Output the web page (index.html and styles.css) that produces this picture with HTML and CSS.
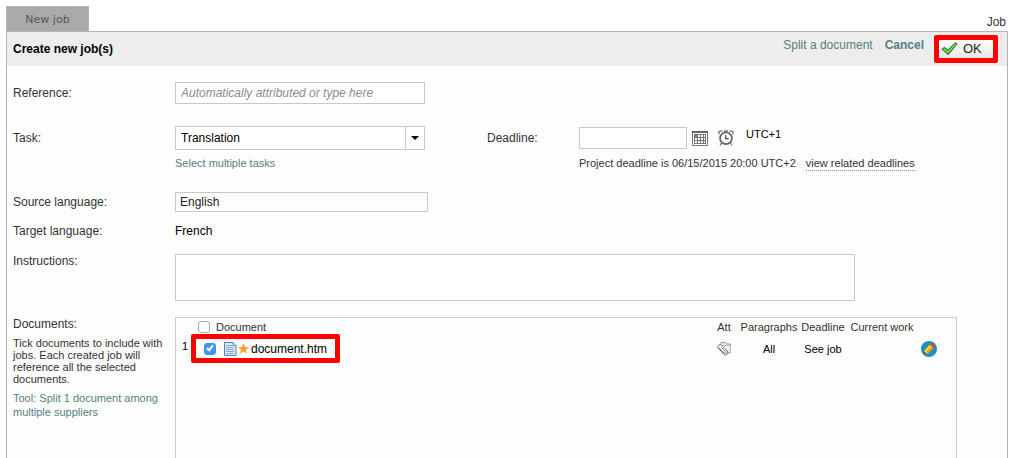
FILE: index.html
```html
<!DOCTYPE html>
<html lang="en">
<head>
  <meta charset="UTF-8">
  <meta name="viewport" content="width=device-width, initial-scale=1.0">
  <title>New job</title>
  <link rel="stylesheet" href="styles.css">
</head>
<body>

  <div class="top">
    <div class="tab">New job</div>
    <div class="page-name">Job</div>
  </div>

  <form class="panel">
    <div class="panel-header">
      <h1>Create new job(s)</h1>
      <div class="actions">
        <a href="#">Split a document</a>
        <a href="#" class="cancel">Cancel</a>
        <span class="highlight">
          <button type="button" class="ok-button">
            <svg width="17" height="14" viewBox="0 0 17 14">
              <path d="M.8 7.200L3.500 5.300L6.800 8L14.200 .8L16.200 1.800L7.300 12.800Z" fill="#4fae35" stroke="#2f7d22" stroke-linejoin="round"/>
              <path d="M2.600 7L6.900 10.200L14.300 2.300" fill="none" stroke="#9be077"/>
            </svg>
            OK
          </button>
        </span>
      </div>
    </div>

    <div class="row">
      <label for="reference">Reference:</label>
      <input id="reference" type="text" class="field" placeholder="Automatically attributed or type here">
    </div>

    <div class="row row-task">
      <label for="task">Task:</label>
      <div class="task">
        <div class="select-box">
          <select id="task">
            <option>Translation</option>
          </select>
        </div>
        <a href="#" class="small">Select multiple tasks</a>
      </div>
      <label for="deadline">Deadline:</label>
      <div>
        <div class="deadline">
          <input id="deadline" type="text" class="field">
          <svg class="calendar" width="16" height="16" viewBox="0 0 16 16">
            <path d="M.5 1.500h15v14H.5z" fill="#fff" stroke="#777"/>
            <path d="M0 1h16v2H0z" fill="#666"/>
            <path d="M2 4h12v10H2z" fill="#777"/>
            <path d="M6 5h2v2H6zM9 5h2v2H9zM12 5h1v2h-1zM3 8h2v2H3zM6 8h2v2H6zM9 8h2v2H9zM12 8h1v2h-1zM3 11h2v2H3zM6 11h2v2H6zM9 11h2v2H9zM12 11h1v2h-1z" fill="#fff"/>
          </svg>
          <svg class="clock" width="16" height="16" viewBox="0 0 16 16">
            <path d="M1 4.500L1 1.500L4.500 .8M15 4.500L15 1.500L11.500 .8M6 1h4M3.500 13L2 15.300M12.500 13L14 15.300" fill="none" stroke="#777" stroke-width="1.300"/>
            <circle cx="8" cy="8.300" r="5.900" fill="#fff" stroke="#666" stroke-width="1.800"/>
            <path d="M7.700 5v3.600h3" fill="none" stroke="#444" stroke-width="1.200"/>
          </svg>
          <span class="utc">UTC+1</span>
        </div>
        <div class="deadline-info small">
          <span>Project deadline is 06/15/2015 20:00 UTC+2</span>
          <a href="#" class="related">view related deadlines</a>
        </div>
      </div>
    </div>

    <div class="row row-source">
      <label for="source">Source language:</label>
      <input id="source" type="text" class="field source" value="English">
    </div>

    <div class="row row-target">
      <span>Target language:</span>
      <span class="value">French</span>
    </div>

    <div class="row row-wide">
      <label for="instructions">Instructions:</label>
      <textarea id="instructions"></textarea>
    </div>

    <div class="row row-wide row-documents">
      <div class="help">
        <div>Documents:</div>
        <p>Tick documents to include with jobs. Each created job will reference all the selected documents.</p>
        <a href="#" class="small">Tool: Split 1 document among multiple suppliers</a>
      </div>
      <div class="documents">
        <table>
          <colgroup>
            <col class="col-num">
            <col>
            <col class="col-att">
            <col class="col-par">
            <col class="col-deadline">
            <col class="col-work">
            <col class="col-edit">
          </colgroup>
          <thead>
            <tr>
              <th></th>
              <th class="doc-head">
                <label><input type="checkbox"> Document</label>
              </th>
              <th>Att</th>
              <th>Paragraphs</th>
              <th>Deadline</th>
              <th>Current work</th>
              <th></th>
            </tr>
          </thead>
          <tbody>
            <tr>
              <td class="num">1</td>
              <td class="doc">
                <label class="highlight">
                  <input type="checkbox" checked>
                  <svg class="file" width="13" height="14" viewBox="0 0 13 14">
                    <path d="M.5 .5h8.500l3 3v10H.5z" fill="#dcebfa" stroke="#5b7ea8"/>
                    <path d="M9 .5v3h3" fill="#fff" stroke="#5b7ea8"/>
                    <path d="M2 3.500h6M2 5.500h8M2 7.500h8M2 9.500h8M2 11.500h8" stroke="#7fa9d6"/>
                  </svg>
                  <svg class="star" width="11" height="11" viewBox="0 0 11 11">
                    <path d="M5.500 0L7 3.900L11 4.100L7.900 6.600L9 10.700L5.500 8.400L2 10.700L3.100 6.600L0 4.100L4 3.900Z" fill="#ff9c35"/>
                  </svg>
                  document.htm
                </label>
              </td>
              <td>
                <svg class="attachment" width="16" height="16" viewBox="0 0 16 16">
                  <path d="M5 3.500V1.500h4.500l1 1.500h4v9H11" fill="#eee" stroke="#999"/>
                  <path d="M6.500 4.500h8v7" fill="none" stroke="#bbb"/>
                  <path d="M1.500 6L7.500 13q2 1.800 3.600 .4t.2-3.400L5.800 4.300q-1.500-1.400-2.900-.3t-.2 2.700L8 12q1 .8 1.600 .2t0-1.400L5.500 6.500" fill="none" stroke="#777"/>
                </svg>
              </td>
              <td>All</td>
              <td>See job</td>
              <td></td>
              <td class="edit">
                <svg width="16" height="16" viewBox="0 0 16 16">
                  <circle cx="8" cy="8" r="8" fill="#1f8fbe"/>
                  <path d="M2.800 13.200L3.800 9L9 3.600L12.600 7.200L7.200 12.300Z" fill="#ffd42e"/>
                  <path d="M5.700 10.700L11 5.500L12.600 7.200L7.200 12.300Z" fill="#dd9d12"/>
                  <path d="M9 3.600L10.300 2.500Q11.600 1.900 12.900 3.300T13.700 6L12.600 7.200Z" fill="#e0412f"/>
                  <path d="M2.800 13.200L3.400 10.700L5.400 12.600Z" fill="#4a3a20"/>
                </svg>
              </td>
            </tr>
          </tbody>
        </table>
      </div>
    </div>
  </form>

</body>
</html>
```
FILE: styles.css
```css
* {
  box-sizing: border-box;
}

body {
  margin: 0;
  padding: 6px 11px 0 6px;
  min-height: 100vh;
  display: flex;
  flex-direction: column;
  background-color: #fff;
  color: #333;
  font-family: "Liberation Sans", Arial, sans-serif;
  font-size: 12px;
  line-height: 16px;
}

a {
  color: #55807e;
  text-decoration: none;
}

svg {
  display: block;
  flex-shrink: 0;
}

input,
select,
textarea,
button {
  margin: 0;
  font: inherit;
}

.small {
  font-size: 11px;
  line-height: 14px;
}

/* Tab above the panel */
.top {
  display: flex;
  justify-content: space-between;
}

.tab {
  width: 83px;
  height: 25px;
  border: 1px solid #b4b4b4;
  border-bottom: none;
  background-color: #aaa;
  color: #555;
  font-family: "DejaVu Sans", Verdana, sans-serif;
  font-size: 11px;
  line-height: 25px;
  text-align: center;
}

.page-name {
  padding: 8px 2px 0 0;
}

.panel {
  flex-grow: 1;
  display: flex;
  flex-direction: column;
  border: 1px solid #b4b4b4;
  border-bottom: none;
  background-color: #fdfdfd;
}

.panel-header {
  display: flex;
  justify-content: space-between;
  height: 34px;
  margin-bottom: 16px;
  padding: 3px 9px 0 6px;
  background-color: #ededed;
}

.panel-header h1 {
  margin: 6px 0 0;
  color: #000;
  font-size: 12px;
}

.actions {
  display: flex;
  align-items: flex-start;
}

.actions a {
  padding-top: 2px;
  margin-right: 12px;
}

.actions .cancel {
  margin-right: 10px;
  font-weight: bold;
}

.highlight {
  display: flex;
  border: 5px solid #f00;
  border-radius: 2px;
}

.ok-button {
  display: flex;
  align-items: center;
  gap: 5px;
  width: 54px;
  height: 18px;
  padding: 0 2px;
  border: none;
  background: linear-gradient(#fff, #e6e6e6);
  color: #222;
  font-size: 13px;
  cursor: pointer;
}

/* Form rows */
.row {
  display: grid;
  grid-template-columns: 162px 312px 92px 1fr;
  align-items: center;
  margin-bottom: 22px;
  padding-left: 6px;
}

.row-task {
  align-items: start;
  margin-bottom: 21px;
}

.row-task > label {
  padding-top: 4px;
}

.row-source {
  margin-bottom: 11px;
}

.row-target {
  margin-bottom: 14px;
}

.row-wide {
  grid-template-columns: 162px 1fr;
  align-items: start;
  margin-bottom: 15px;
}

.value {
  color: #000;
}

.field {
  width: 250px;
  height: 22px;
  padding: 0 5px;
  border: 1px solid #c8c8c8;
  background-color: #fff;
  color: #222;
}

.field::placeholder {
  color: #8c8c8c;
  font-style: italic;
}

.source {
  width: 253px;
  height: 20px;
  padding: 0 4px;
  background-color: #fdfdfd;
}

.task .small {
  display: block;
  margin-top: 6px;
}

.select-box {
  position: relative;
  width: 250px;
}

.select-box select {
  display: block;
  width: 100%;
  height: 24px;
  padding: 0 5px;
  border: 1px solid #c8c8c8;
  border-radius: 0;
  background-color: #fff;
  color: #000;
  appearance: none;
}

.select-box::before {
  content: "";
  position: absolute;
  top: 0;
  right: 19px;
  height: 24px;
  border-left: 1px solid #c8c8c8;
}

.select-box::after {
  content: "";
  position: absolute;
  top: 10px;
  right: 6px;
  border: 4px solid transparent;
  border-top-color: #000;
  border-bottom: none;
}

.deadline {
  display: flex;
  align-items: center;
  height: 24px;
}

.deadline .field {
  width: 108px;
}

.calendar {
  margin-left: 5px;
}

.clock {
  margin-left: 10px;
}

.utc {
  margin: 0 0 8px 12px;
  color: #000;
  font-size: 11px;
}

.deadline-info {
  display: flex;
  align-items: flex-start;
  gap: 10px;
  padding-top: 6px;
}

.related {
  border-bottom: 1px dotted #888;
  color: #333;
}

#instructions {
  display: block;
  width: 680px;
  max-width: 100%;
  height: 47px;
  margin-top: 1px;
  border: 1px solid #c8c8c8;
  background-color: #fff;
  resize: none;
}

/* Documents */
.row-documents {
  flex-grow: 1;
  align-items: stretch;
  margin-bottom: 0;
  padding-right: 50px;
}

.help {
  width: 155px;
}

.help p {
  margin: 5px 0 6px;
  font-size: 11px;
  line-height: 12px;
}

.help a {
  display: block;
}

.documents {
  margin-top: 1px;
  border: 1px solid #ccc;
  border-bottom: none;
}

.documents table {
  width: 100%;
  table-layout: fixed;
  border-collapse: collapse;
  font-size: 11px;
}

.documents th,
.documents td {
  padding: 0;
  text-align: center;
  white-space: nowrap;
}

.documents th {
  height: 16px;
  padding-top: 2px;
  font-weight: normal;
  line-height: 14px;
}

.documents td {
  color: #000;
}

.documents td svg {
  margin: 0 auto;
}

.col-num {
  width: 15px;
}

.col-att {
  width: 32px;
}

.col-par {
  width: 58px;
}

.col-deadline {
  width: 50px;
}

.col-work {
  width: 68px;
}

.col-edit {
  width: 40px;
}

.documents .doc-head label {
  display: flex;
  align-items: center;
  gap: 6px;
  padding-left: 7px;
}

.documents input {
  position: relative;
  flex-shrink: 0;
  width: 12px;
  height: 12px;
  border: 1px solid #aaa;
  border-radius: 3px;
  background-color: #fff;
  appearance: none;
}

.documents input:checked {
  border-color: #3b91f0;
  background-color: #3f97f6;
}

.documents input:checked::after {
  content: "";
  position: absolute;
  top: 0;
  left: 3px;
  width: 2px;
  height: 5px;
  border: solid #fff;
  border-width: 0 2px 2px 0;
  transform: rotate(40deg);
}

.documents .num {
  padding: 4px 0 0 3px;
  vertical-align: top;
}

.documents .doc .highlight {
  align-items: center;
  width: 149px;
  height: 29px;
  padding-left: 8px;
  font-size: 12px;
}

.documents .doc .file {
  margin: 0 1px 0 8px;
}

.documents .doc .star {
  margin: 0 2px 0 0;
}

.documents .edit {
  padding-right: 14px;
}
```
